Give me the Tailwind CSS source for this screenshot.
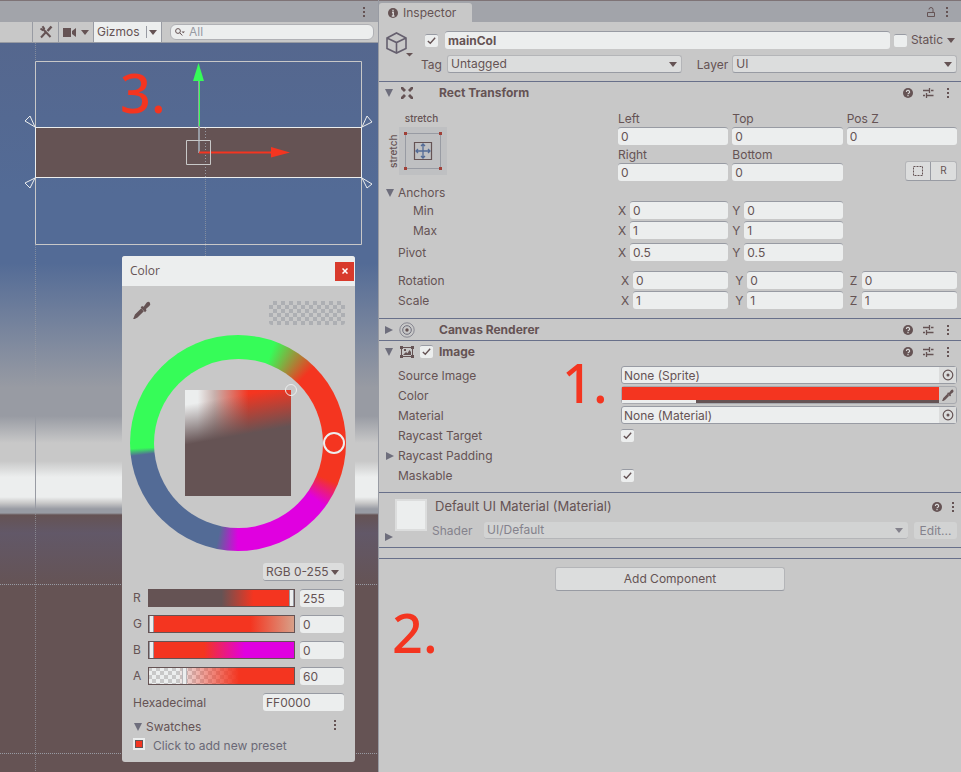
<!DOCTYPE html>
<html lang="en">
<head>
<meta charset="utf-8">
<meta name="viewport" content="width=device-width, initial-scale=1">
<title>Scene and Inspector</title>
<script src="https://cdn.jsdelivr.net/npm/@tailwindcss/browser@4"></script>
</head>
<body class="min-h-screen bg-[#c8c8c8] font-['Inter','Liberation_Sans',sans-serif] text-xs text-[#655354]">
<svg class="hidden" aria-hidden="true">
  <symbol id="dots" viewBox="0 0 4 12"><path d="M1 1h2v2H1zM1 5h2v2H1zM1 9h2v2H1z" fill="currentColor"/></symbol>
  <symbol id="down" viewBox="0 0 8 5"><path d="M0 0h8L4 5z" fill="currentColor"/></symbol>
  <symbol id="fold-open" viewBox="0 0 8 8"><path d="M0 0h8L4 8z" fill="#6e6e7c"/></symbol>
  <symbol id="fold-shut" viewBox="0 0 8 8"><path d="M0 0v8l8-4z" fill="#6e6e7c"/></symbol>
  <symbol id="check" viewBox="0 0 12 12"><path d="M2 6.5 4.7 9 10 3" fill="none" stroke="currentColor" stroke-width="1.5"/></symbol>
  <symbol id="help" viewBox="0 0 10 10"><circle cx="5" cy="5" r="5" fill="currentColor"/><path d="M3.4 4a1.6 1.5 0 1 1 2.4 1.2Q5 5.6 5 6.3M5 7.1v1.2" fill="none" stroke="#d8d8d8" stroke-width="1.2"/></symbol>
  <symbol id="preset" viewBox="0 0 12 12"><path d="M1 3.5h6.500M9 3.500h2.500M1 8.500h2M4.500 8.500h7M7.500 1v5M4.500 6v5" fill="none" stroke="currentColor" stroke-width="1.300"/></symbol>
  <symbol id="target" viewBox="0 0 12 12"><circle cx="6" cy="6" r="4.800" fill="none" stroke="currentColor" stroke-width="1.200"/><circle cx="6" cy="6" r="1.500" fill="currentColor"/></symbol>
  <symbol id="dropper" viewBox="0 0 16 16"><path d="M8 4.500 9.500 5 12 1.500q2-1.500 3 0t-.5 3L11.500 7l.5 1.500-1.300 1.500L6.800 5.800z" fill="currentColor"/><path d="M8 7 2.500 12.500 1.500 15l2-1L9 8.500" fill="none" stroke="currentColor" stroke-width="1.800"/></symbol>
</svg>

<div class="grid min-h-screen grid-cols-[minmax(0,378fr)_minmax(0,583fr)]">

<!-- Scene view -->
<section class="flex min-w-0 flex-col" aria-label="Scene">
  <header class="flex h-[22px] items-center justify-end border-t border-[#655354]/60 bg-[#a2a4aa] px-3">
    <button aria-label="Scene menu"><svg class="h-3 w-1"><use href="#dots"/></svg></button>
  </header>
  <div class="flex h-[21px] border-b border-[#989ba3] bg-[#c8c8c8]">
    <div class="w-8"></div>
    <button class="grid w-[26px] place-items-center border-l border-[#989ba3]" aria-label="Tools">
      <svg class="size-[14px]" viewBox="0 0 14 14" fill="none" stroke="currentColor"><path d="M4 4l7.500 8" stroke-width="2"/><path d="M1.500 3.500 3.500 5 5 3.500 3.500 1.300" stroke-width="2"/><path d="M2 12.500 7 7" stroke-width="2"/><path d="M8.500 6 12.500 1.500" stroke-width="2.500"/></svg>
    </button>
    <button class="flex w-[35px] items-center justify-between border-l border-[#989ba3] px-1" aria-label="Scene camera">
      <svg class="h-[9px] w-[13px]" viewBox="0 0 13 9" fill="currentColor"><path d="M0 0h8v9H0zM9 3l4-3v9L9 6z"/></svg>
      <svg class="h-[5px] w-2"><use href="#down"/></svg>
    </button>
    <button class="flex w-[69px] items-center justify-between border-x border-[#989ba3] bg-[#eceeee] pr-1 pl-[3px]">
      <span>Gizmos</span><span class="ml-1 h-3 w-px bg-[#989ba3]"></span><svg class="h-[5px] w-2"><use href="#down"/></svg>
    </button>
    <div class="flex min-w-0 flex-1 items-center pr-1 pl-2">
      <label class="flex h-4 w-full items-center gap-1 rounded-md border border-[#b0b1b5] bg-[#eceeee] pl-1">
        <svg class="h-2 w-[10px] shrink-0" viewBox="0 0 10 8" fill="none" stroke="currentColor"><circle cx="3" cy="3" r="2.400"/><path d="m4.800 4.800 2.500 2.700"/><path d="M6.500 3.500h3.500L8.200 5.300z" fill="currentColor" stroke="none"/></svg>
        <input class="min-w-0 flex-1 bg-transparent outline-none placeholder:text-[#989ba3]" type="search" placeholder="All" aria-label="Search scene">
      </label>
    </div>
  </div>

  <div class="relative flex-1 overflow-hidden bg-[linear-gradient(#55678e_0px,#536b96_150px,#536b96_220px,#989ba3_345px,#989ba3_373px,#c8c8c8_400px,#c8c8c8_418px,#eceeee_434px,#eceeee_454px,#c8c8c8_460px,#989ba3_466px,#989ba3_470px,#655354_472px,#625868_490px,#655354_545px)]">
    <svg class="absolute top-0 left-0 h-[729px] w-[378px]" viewBox="0 43 378 729" fill="none">
      <path d="M35.500 43v18M35.500 245v150M35.500 510v262M205.500 179v77" stroke="#989ba3" stroke-opacity=".7" stroke-dasharray="1 1"/>
      <path d="M35.500 410v100" stroke="#989ba3"/>
      <path d="M0 584.500h378M0 753.500h378" stroke="#989ba3" stroke-dasharray="1 1"/>
      <path d="M36 127h326v51H36z" fill="#655354"/>
      <path d="M205.500 128v50" stroke="#989ba3" stroke-dasharray="1 2"/>
      <path d="M35.500 61.500h326v183h-326z" stroke="#c8c8c8"/>
      <path d="M35 127.500h327M35 177.500h327M35.500 127v51M361.500 127v51" stroke="#eceeee"/>
      <g stroke="#eceeee"><path d="m35 127-10-6 5-5zM362 127l10-5-5-6zM35 178l-10 5 5 5zM362 178l10 6-5 4z"/></g>
      <path d="M199 80v73" stroke="#989ba3" stroke-width="2"/><path d="M199.500 80v46" stroke="#36fc58"/>
      <path d="m198.500 63 5.500 18h-11z" fill="#36fc58"/>
      <path d="M199 152.500h72" stroke="#f43520" stroke-width="2"/><path d="m271 147 19 5.500-19 5z" fill="#f43520"/>
      <path d="M186.500 140.500h24v24h-24z" stroke="#c8c8c8"/>
    </svg>
    <p class="absolute top-[11px] left-[120px] font-['Noto_Sans',sans-serif] text-[54px] leading-[76px] font-medium text-[#f43520]">3.</p>

    <!-- Colour picker window -->
    <div class="absolute top-[213px] left-[122px] w-[233px] rounded-[3px] bg-[#c8c8c8] text-[#655354]" role="dialog" aria-label="Color">
      <div class="flex h-[30px] items-center justify-between rounded-t-[3px] bg-[#eceeee] pr-px pl-2">
        <h2 class="font-['Open_Sans',sans-serif]">Color</h2>
        <button class="grid size-[19px] place-items-center bg-[#d83a2c] text-white" aria-label="Close"><svg class="size-[6px]" viewBox="0 0 6 6"><path d="m.5.5 5 5m0-5-5 5" stroke="currentColor" stroke-width="1.500"/></svg></button>
      </div>
      <div class="flex flex-col px-2 pt-[15px] pb-[7px]">
        <div class="flex items-start justify-between pr-[2px] pl-[3px]">
          <button aria-label="Pick a colour from the screen"><svg class="size-[18px]"><use href="#dropper"/></svg></button>
          <div class="h-6 w-[76px] rounded-[3px] bg-[repeating-conic-gradient(#adafb3_0_25%,#c8c8c8_0_50%)] bg-[length:8px_8px]"></div>
        </div>
        <div class="relative mt-[10px] grid size-[216px] place-items-center rounded-full bg-[conic-gradient(#36fc58_20deg,#f43520_45deg,#f43520_112deg,#e000e0_126deg,#e000e0_180deg,#536b96_192deg,#536b96_263deg,#36fc58_267deg)]">
          <div class="grid size-[169px] place-items-center rounded-full bg-[#c8c8c8]">
            <div class="size-[106px] bg-[linear-gradient(170deg,#65535400_12%,#655354_44%),linear-gradient(to_right,#eceeee_12%,#c8b0ac_28%,#f43520_60%)]"></div>
          </div>
          <span class="absolute top-[97px] left-[193px] size-[22px] rounded-full border-2 border-[#eceeee]"></span>
          <span class="absolute top-[49px] left-[155px] size-3 rounded-full border border-[#eceeee]"></span>
        </div>
        <div class="mt-3 flex flex-col gap-2 px-[3px]">
          <div class="relative flex items-center self-end">
            <select class="h-[18px] w-[81px] appearance-none rounded-[3px] border-b border-[#989ba3] bg-[#dcdddd] pl-[3px]" aria-label="Colour mode"><option>RGB 0-255</option></select>
            <svg class="pointer-events-none absolute right-[5px] h-[5px] w-2"><use href="#down"/></svg>
          </div>
          <div class="flex h-[18px] items-center">
            <label class="w-[15px]" for="r">R</label>
            <input class="h-[18px] w-[147px] appearance-none border border-[#655354] bg-[linear-gradient(to_right,#655354_50%,#f43520_72%)] [&::-webkit-slider-thumb]:h-4 [&::-webkit-slider-thumb]:w-[5px] [&::-webkit-slider-thumb]:appearance-none [&::-webkit-slider-thumb]:border-x [&::-webkit-slider-thumb]:border-[#989ba3] [&::-webkit-slider-thumb]:bg-[#eceeee]" id="r" type="range" min="0" max="255" value="255">
            <input class="ml-[5px] h-[18px] w-11 rounded-[3px] border-t border-[#989ba3] bg-[#eceeee] px-[3px]" value="255" aria-label="Red value">
          </div>
          <div class="flex h-[18px] items-center">
            <label class="w-[15px]" for="g">G</label>
            <input class="h-[18px] w-[147px] appearance-none border border-[#655354] bg-[linear-gradient(to_right,#f43520_70%,#d8a088)] [&::-webkit-slider-thumb]:h-4 [&::-webkit-slider-thumb]:w-[5px] [&::-webkit-slider-thumb]:appearance-none [&::-webkit-slider-thumb]:border-x [&::-webkit-slider-thumb]:border-[#989ba3] [&::-webkit-slider-thumb]:bg-[#eceeee]" id="g" type="range" min="0" max="255" value="0">
            <input class="ml-[5px] h-[18px] w-11 rounded-[3px] border-t border-[#989ba3] bg-[#eceeee] px-[3px]" value="0" aria-label="Green value">
          </div>
          <div class="flex h-[18px] items-center">
            <label class="w-[15px]" for="b">B</label>
            <input class="h-[18px] w-[147px] appearance-none border border-[#655354] bg-[linear-gradient(to_right,#f43520_38%,#e000e0_66%)] [&::-webkit-slider-thumb]:h-4 [&::-webkit-slider-thumb]:w-[5px] [&::-webkit-slider-thumb]:appearance-none [&::-webkit-slider-thumb]:border-x [&::-webkit-slider-thumb]:border-[#989ba3] [&::-webkit-slider-thumb]:bg-[#eceeee]" id="b" type="range" min="0" max="255" value="0">
            <input class="ml-[5px] h-[18px] w-11 rounded-[3px] border-t border-[#989ba3] bg-[#eceeee] px-[3px]" value="0" aria-label="Blue value">
          </div>
          <div class="flex h-[18px] items-center">
            <label class="w-[15px]" for="a">A</label>
            <div class="h-[18px] w-[147px] bg-[repeating-conic-gradient(#eceeee_0_25%,#c8c8c8_0_50%)] bg-[length:8px_8px]">
            <input class="block h-[18px] w-full appearance-none border border-[#655354] bg-[linear-gradient(to_right,#f4352000_20%,#f43520_62%)] [&::-webkit-slider-thumb]:h-4 [&::-webkit-slider-thumb]:w-[5px] [&::-webkit-slider-thumb]:appearance-none [&::-webkit-slider-thumb]:border-x [&::-webkit-slider-thumb]:border-[#b8b8bb] [&::-webkit-slider-thumb]:bg-[#eceeee]" id="a" type="range" min="0" max="255" value="60">
            </div>
            <input class="ml-[5px] h-[18px] w-11 rounded-[3px] border-t border-[#989ba3] bg-[#eceeee] px-[3px]" value="60" aria-label="Alpha value">
          </div>
          <div class="flex h-[18px] items-center justify-between">
            <label class="pt-[2px]" for="hex">Hexadecimal</label>
            <input class="h-[18px] w-[81px] rounded-[3px] border-t border-[#989ba3] bg-[#eceeee] px-[3px]" id="hex" value="FF0000">
          </div>
        </div>
        <div class="mt-[7px] flex h-[18px] items-center justify-between pr-[10px] pl-1">
          <button class="flex items-center gap-1"><svg class="size-2"><use href="#fold-open"/></svg>Swatches</button>
          <button aria-label="Swatch menu"><svg class="mb-[5px] h-3 w-1"><use href="#dots"/></svg></button>
        </div>
        <button class="mt-px flex h-[18px] items-center gap-2 pl-[3px] text-[#6a6876]">
          <span class="mb-1 size-3 border-2 border-[#eceeee] bg-[#655354] p-px"><span class="block size-full bg-[#f43520]"></span></span>Click to add new preset
        </button>
      </div>
    </div>
  </div>
</section>

<!-- Inspector -->
<section class="relative flex min-w-0 flex-col border-l border-[#989ba3]" aria-label="Inspector">
  <header class="flex h-[22px] items-end justify-between border-t border-[#655354]/60 bg-[#a2a4aa] pr-3">
    <h1 class="flex h-[19px] w-[93px] items-center gap-[5px] rounded-t-[3px] bg-[#c8c8c8] pt-px pl-[9px]">
      <svg class="size-[10px]" viewBox="0 0 10 10"><circle cx="5" cy="5" r="5" fill="currentColor"/><path d="M5 1.800v1.500M4 4.500h1.300V8M3.800 8h2.700" fill="none" stroke="#d8d8d8" stroke-width="1.300"/></svg>Inspector
    </h1>
    <div class="flex h-5 items-center gap-[10px]">
      <button aria-label="Lock"><svg class="h-[10px] w-2" viewBox="0 0 8 10" fill="none" stroke="currentColor"><path d="M.5 5.500h7v4h-7zM6 5V2.500q0-2-2-2t-2 2"/></svg></button>
      <button aria-label="Inspector menu"><svg class="h-3 w-1"><use href="#dots"/></svg></button>
    </div>
  </header>

  <div class="flex gap-[9px] pt-[9px] pr-1 pb-2 pl-[7px]">
    <button class="relative h-[26px] w-[30px] shrink-0" aria-label="Object icon">
      <svg class="h-[26px] w-[28px]" viewBox="0 0 28 26" fill="none"><path d="M1 7 10.500 2 20 7v10.500L10.500 22 1 17.500zM1 7l9.500 4.500L20 7M10.500 11.500V22" stroke="#655f6e" stroke-width="1.600"/><path d="M20 22h7l-3.500 3.500z" fill="#655354"/></svg>
    </button>
    <div class="flex min-w-0 flex-1 flex-col gap-[6px]">
      <div class="flex h-[18px] items-center">
        <label class="grid size-[13px] shrink-0 place-items-center"><input class="size-[13px] appearance-none rounded-[2px] border-t border-[#989ba3] bg-[#eceeee] [grid-area:1/1]" type="checkbox" checked aria-label="Active"><svg class="size-[11px] [grid-area:1/1]"><use href="#check"/></svg></label>
        <input class="ml-[7px] h-[18px] min-w-0 flex-1 rounded-[3px] border-t border-[#989ba3] bg-[#eceeee] px-[3px] font-bold" value="mainCol" aria-label="Object name">
        <label class="ml-1 flex items-center gap-1"><input class="size-[13px] appearance-none rounded-[2px] border-t border-[#989ba3] bg-[#eceeee]" type="checkbox">Static</label>
        <svg class="mr-[2px] ml-1 h-[5px] w-2"><use href="#down"/></svg>
      </div>
      <div class="-ml-1 flex h-[18px] items-center">
        <label class="w-[26px] shrink-0 pt-[2px]" for="tag">Tag</label>
        <div class="relative flex flex-[234] items-center">
          <select class="h-[18px] w-full appearance-none rounded-[3px] border border-b-[#989ba3] border-[#b4b5b8] bg-[#dcdddd] pl-[3px]" id="tag"><option>Untagged</option></select>
          <svg class="pointer-events-none absolute right-[5px] h-[5px] w-2"><use href="#down"/></svg>
        </div>
        <label class="mr-1 ml-[15px] pt-[2px]" for="layer">Layer</label>
        <div class="relative flex flex-[224] items-center">
          <select class="h-[18px] w-full appearance-none rounded-[3px] border border-b-[#989ba3] border-[#b4b5b8] bg-[#dcdddd] pl-[3px]" id="layer"><option>UI</option></select>
          <svg class="pointer-events-none absolute right-[5px] h-[5px] w-2"><use href="#down"/></svg>
        </div>
      </div>
    </div>
  </div>

  <!-- Rect Transform -->
  <section class="border-t border-[#68708a] pb-[9px]">
    <div class="flex h-[21px] items-center pr-[11px] pl-[6px]">
      <button aria-label="Collapse"><svg class="size-2"><use href="#fold-open"/></svg></button>
      <svg class="ml-2 size-3" viewBox="0 0 12 12" fill="currentColor"><path d="M0 0h2l3 3-2 2-3-3zM12 0h-2L7 3l2 2 3-3zM0 12h2l3-3-2-2-3 3zM12 12h-2L7 9l2-2 3 3z"/><path d="M5 0h2v12H5zM0 5h12v2H0z" fill="#c8c8c8"/></svg>
      <h2 class="ml-[26px] flex-1 font-bold">Rect Transform</h2>
      <div class="flex items-center gap-3"><button aria-label="Help"><svg class="size-[10px]"><use href="#help"/></svg></button><button class="-ml-[3px]" aria-label="Presets"><svg class="size-3"><use href="#preset"/></svg></button><button aria-label="Menu"><svg class="h-3 w-1"><use href="#dots"/></svg></button></div>
    </div>
    <div class="flex items-start pt-[6px] pr-1 pl-2">
      <button class="grid w-[231px] shrink-0 grid-cols-[12px_48px] items-center text-[10px] leading-none font-medium" aria-label="Anchor presets">
        <span></span><span class="py-1 pr-[3px] text-center">stretch</span>
        <span class="grid h-12 w-3 rotate-180 place-items-center text-center [writing-mode:vertical-rl]">stretch</span>
        <svg class="size-12" viewBox="0 0 48 48" fill="none"><path d="M0 0h48v48H0z" fill="#bfc0c2"/><path d="M6.500 6.500h35v35h-35z" stroke="#989ba3"/><path d="M5 5h3v3H5zM40 5h3v3h-3zM5 40h3v3H5zM40 40h3v3h-3z" fill="#a04038"/><path d="M15.500 15.500h17v17h-17z" stroke="#655354" stroke-width="1.200"/><path d="M24 17v14M17 24h14M22 19l2-2 2 2M22 29l2 2 2-2M19 22l-2 2 2 2M29 22l2 2-2 2" stroke="#536b96" stroke-width="1.300"/></svg>
      </button>
      <div class="grid min-w-0 flex-1 grid-cols-3 gap-x-1">
        <label class="flex h-[18px] items-center pt-[2px]" for="left">Left</label><label class="flex h-[18px] items-center pt-[2px]" for="top">Top</label><label class="flex h-[18px] items-center pt-[2px]" for="posz">Pos Z</label>
        <input class="h-[18px] min-w-0 rounded-[3px] border-t border-[#989ba3] bg-[#eceeee] px-[3px]" id="left" value="0"><input class="h-[18px] min-w-0 rounded-[3px] border-t border-[#989ba3] bg-[#eceeee] px-[3px]" id="top" value="0"><input class="h-[18px] min-w-0 rounded-[3px] border-t border-[#989ba3] bg-[#eceeee] px-[3px]" id="posz" value="0">
        <label class="flex h-[18px] items-center pt-[2px]" for="right">Right</label><label class="flex h-[18px] items-center pt-[2px]" for="bottom">Bottom</label><span></span>
        <input class="h-[18px] min-w-0 rounded-[3px] border-t border-[#989ba3] bg-[#eceeee] px-[3px]" id="right" value="0"><input class="h-[18px] min-w-0 rounded-[3px] border-t border-[#989ba3] bg-[#eceeee] px-[3px]" id="bottom" value="0">
        <div class="-mt-[2px] flex h-5 justify-self-end rounded-[3px] border border-b-[#989ba3] border-[#b4b5b8] bg-[#dcdddd] text-[10px]">
          <button class="grid w-6 place-items-center" aria-label="Blueprint mode"><svg class="size-[10px]" viewBox="0 0 10 10"><path d="M.5.5h9v9h-9z" fill="none" stroke="currentColor" stroke-dasharray="2 1"/></svg></button>
          <button class="w-[26px] border-l border-[#989ba3]" aria-label="Raw edit mode">R</button>
        </div>
      </div>
    </div>
    <div class="flex flex-col pt-[2px] pr-1 pl-[7px]">
      <button class="flex h-[18px] items-center gap-1 self-start pt-[2px]"><svg class="size-2"><use href="#fold-open"/></svg>Anchors</button>
      <div class="flex h-[18px] items-center pl-[27px]">
        <span class="w-[205px] shrink-0 pt-[2px]">Min</span>
        <div class="grid min-w-0 flex-1 grid-cols-3 gap-x-1">
          <label class="flex items-center"><span class="w-3 pt-px">X</span><input class="h-[18px] min-w-0 flex-1 rounded-[3px] border-t border-[#989ba3] bg-[#eceeee] px-[3px]" value="0"></label>
          <label class="flex items-center"><span class="w-3 pt-px">Y</span><input class="h-[18px] min-w-0 flex-1 rounded-[3px] border-t border-[#989ba3] bg-[#eceeee] px-[3px]" value="0"></label>
        </div>
      </div>
      <div class="mt-[2px] flex h-[18px] items-center pl-[27px]">
        <span class="w-[205px] shrink-0 pt-[2px]">Max</span>
        <div class="grid min-w-0 flex-1 grid-cols-3 gap-x-1">
          <label class="flex items-center"><span class="w-3 pt-px">X</span><input class="h-[18px] min-w-0 flex-1 rounded-[3px] border-t border-[#989ba3] bg-[#eceeee] px-[3px]" value="1"></label>
          <label class="flex items-center"><span class="w-3 pt-px">Y</span><input class="h-[18px] min-w-0 flex-1 rounded-[3px] border-t border-[#989ba3] bg-[#eceeee] px-[3px]" value="1"></label>
        </div>
      </div>
      <div class="mt-1 flex h-[18px] items-center pl-3">
        <span class="w-[220px] shrink-0 pt-[2px]">Pivot</span>
        <div class="grid min-w-0 flex-1 grid-cols-3 gap-x-1">
          <label class="flex items-center"><span class="w-3 pt-px">X</span><input class="h-[18px] min-w-0 flex-1 rounded-[3px] border-t border-[#989ba3] bg-[#eceeee] px-[3px]" value="0.5"></label>
          <label class="flex items-center"><span class="w-3 pt-px">Y</span><input class="h-[18px] min-w-0 flex-1 rounded-[3px] border-t border-[#989ba3] bg-[#eceeee] px-[3px]" value="0.5"></label>
        </div>
      </div>
      <div class="mt-[10px] flex h-[18px] items-center pl-3">
        <span class="w-[220px] shrink-0 pt-[2px]">Rotation</span>
        <div class="grid min-w-0 flex-1 grid-cols-3 gap-x-1">
          <label class="flex items-center pl-[3px]"><span class="w-3 pt-px">X</span><input class="h-[18px] min-w-0 flex-1 rounded-[3px] border-t border-[#989ba3] bg-[#eceeee] px-[3px]" value="0"></label>
          <label class="flex items-center pl-[3px]"><span class="w-3 pt-px">Y</span><input class="h-[18px] min-w-0 flex-1 rounded-[3px] border-t border-[#989ba3] bg-[#eceeee] px-[3px]" value="0"></label>
          <label class="flex items-center pl-[3px]"><span class="w-3 pt-px">Z</span><input class="h-[18px] min-w-0 flex-1 rounded-[3px] border-t border-[#989ba3] bg-[#eceeee] px-[3px]" value="0"></label>
        </div>
      </div>
      <div class="mt-[2px] flex h-[18px] items-center pl-3">
        <span class="w-[220px] shrink-0 pt-[2px]">Scale</span>
        <div class="grid min-w-0 flex-1 grid-cols-3 gap-x-1">
          <label class="flex items-center pl-[3px]"><span class="w-3 pt-px">X</span><input class="h-[18px] min-w-0 flex-1 rounded-[3px] border-t border-[#989ba3] bg-[#eceeee] px-[3px]" value="1"></label>
          <label class="flex items-center pl-[3px]"><span class="w-3 pt-px">Y</span><input class="h-[18px] min-w-0 flex-1 rounded-[3px] border-t border-[#989ba3] bg-[#eceeee] px-[3px]" value="1"></label>
          <label class="flex items-center pl-[3px]"><span class="w-3 pt-px">Z</span><input class="h-[18px] min-w-0 flex-1 rounded-[3px] border-t border-[#989ba3] bg-[#eceeee] px-[3px]" value="1"></label>
        </div>
      </div>
    </div>
  </section>

  <!-- Canvas Renderer -->
  <section class="border-t border-[#68708a]">
    <div class="flex h-[21px] items-center pr-[11px] pl-[6px]">
      <button aria-label="Expand"><svg class="size-2"><use href="#fold-shut"/></svg></button>
      <svg class="ml-[6px] size-4" viewBox="0 0 16 16" fill="none" stroke="#6e6e7c"><circle cx="8" cy="8" r="7.200" stroke-opacity=".7"/><circle cx="8" cy="8" r="4.300"/><circle cx="8" cy="8" r="1.700" fill="#655354" stroke="none"/></svg>
      <h2 class="ml-6 flex-1 font-bold">Canvas Renderer</h2>
      <div class="flex items-center gap-3"><button aria-label="Help"><svg class="size-[10px]"><use href="#help"/></svg></button><button class="-ml-[3px]" aria-label="Presets"><svg class="size-3"><use href="#preset"/></svg></button><button aria-label="Menu"><svg class="h-3 w-1"><use href="#dots"/></svg></button></div>
    </div>
  </section>

  <!-- Image -->
  <section class="relative border-t border-[#68708a] pb-2">
    <div class="flex h-[21px] items-center pr-[11px] pl-[6px]">
      <button aria-label="Collapse"><svg class="size-2"><use href="#fold-open"/></svg></button>
      <svg class="ml-[7px] h-3 w-[14px]" viewBox="0 0 14 12" fill="none"><path d="M2 1.500h10M2 10.500h10M1.500 2v8M12.500 2v8" stroke="currentColor"/><path d="M0 0h3v3H0zM11 0h3v3h-3zM0 9h3v3H0zM11 9h3v3h-3zM3 9l3-3 1.500 1.200L9.500 4 11 6v3zM4 3h2v2H4z" fill="currentColor"/></svg>
      <label class="ml-[6px] grid size-[13px] place-items-center"><input class="size-[13px] appearance-none rounded-[2px] border-t border-[#989ba3] bg-[#eceeee] [grid-area:1/1]" type="checkbox" checked aria-label="Image enabled"><svg class="size-[11px] [grid-area:1/1]"><use href="#check"/></svg></label>
      <h2 class="ml-[6px] flex-1 font-bold">Image</h2>
      <div class="flex items-center gap-3"><button aria-label="Help"><svg class="size-[10px]"><use href="#help"/></svg></button><button class="-ml-[3px]" aria-label="Presets"><svg class="size-3"><use href="#preset"/></svg></button><button aria-label="Menu"><svg class="h-3 w-1"><use href="#dots"/></svg></button></div>
    </div>
    <div class="grid auto-rows-[18px] grid-cols-[223px_minmax(0,1fr)] items-center gap-y-[2px] pt-1 pr-1 pl-[19px]">
      <label class="pt-[2px]" for="src">Source Image</label>
      <div class="flex h-[18px] rounded-[3px] border border-[#989ba3] bg-[#eceeee]"><input class="min-w-0 flex-1 px-[2px] pt-[2px]" id="src" value="None (Sprite)" readonly><button class="grid w-[17px] place-items-center bg-[#dcdddd]" aria-label="Select sprite"><svg class="size-3"><use href="#target"/></svg></button></div>
      <span class="pt-[2px]">Color</span>
      <div class="flex h-[18px] rounded-[3px] border border-[#a8aaaf]"><button class="flex min-w-0 flex-1 flex-col bg-[#f43520]" aria-label="Color"><span class="flex-1"></span><span class="h-[3px] w-full bg-[linear-gradient(to_right,#eceeee_23.500%,#655354_0)]"></span></button><button class="grid w-[17px] place-items-center" aria-label="Pick color"><svg class="size-3"><use href="#dropper"/></svg></button></div>
      <label class="pt-[2px]" for="mat">Material</label>
      <div class="flex h-[18px] rounded-[3px] border border-[#989ba3] bg-[#eceeee]"><input class="min-w-0 flex-1 px-[2px] pt-[2px]" id="mat" value="None (Material)" readonly><button class="grid w-[17px] place-items-center bg-[#dcdddd]" aria-label="Select material"><svg class="size-3"><use href="#target"/></svg></button></div>
      <label class="pt-[2px]" for="ray">Raycast Target</label>
      <span class="grid size-[13px] place-items-center"><input class="size-[13px] appearance-none rounded-[2px] border-t border-[#989ba3] bg-[#eceeee] [grid-area:1/1]" id="ray" type="checkbox" checked><svg class="pointer-events-none size-[11px] [grid-area:1/1]"><use href="#check"/></svg></span>
      <button class="col-span-2 -ml-3 flex items-center gap-1 justify-self-start pt-[2px]"><svg class="size-2"><use href="#fold-shut"/></svg>Raycast Padding</button>
      <label class="pt-[2px]" for="mask">Maskable</label>
      <span class="grid size-[13px] place-items-center"><input class="size-[13px] appearance-none rounded-[2px] border-t border-[#989ba3] bg-[#eceeee] [grid-area:1/1]" id="mask" type="checkbox" checked><svg class="pointer-events-none size-[11px] [grid-area:1/1]"><use href="#check"/></svg></span>
    </div>
    <p class="absolute top-[3px] left-[183px] font-['Noto_Sans',sans-serif] text-[54px] leading-[76px] font-medium text-[#f43520]">1.</p>
  </section>

  <!-- Material -->
  <section class="flex h-[55px] border-t border-[#68708a] pt-[5px] pr-1 pl-[6px]">
    <button class="self-end pb-[6px]" aria-label="Expand"><svg class="size-2"><use href="#fold-shut"/></svg></button>
    <div class="mt-px ml-[2px] size-8 shrink-0 border-2 border-[#dcdddd] bg-[#eceeee]"></div>
    <div class="ml-[5px] flex min-w-0 flex-1 flex-col">
      <div class="flex h-[18px] items-center pr-[2px]">
        <h2 class="flex-1 pl-[3px] text-[13px]">Default UI Material (Material)</h2>
        <button aria-label="Help"><svg class="size-[10px]"><use href="#help"/></svg></button>
        <button class="ml-[9px]" aria-label="Menu"><svg class="h-3 w-1"><use href="#dots"/></svg></button>
      </div>
      <div class="mt-[6px] flex h-[17px] items-center text-[#84828c]">
        <label class="w-[52px] pt-px" for="shader">Shader</label>
        <div class="relative flex flex-1 items-center">
          <select class="h-[17px] w-full appearance-none rounded-[3px] border-b border-[#b4b5b8] bg-[#d2d3d3] pl-[3px]" id="shader"><option>UI/Default</option></select>
          <svg class="pointer-events-none absolute right-[5px] h-[5px] w-2"><use href="#down"/></svg>
        </div>
        <button class="ml-[6px] h-[17px] w-[43px] rounded-[3px] bg-[#d2d3d3]">Edit...</button>
      </div>
    </div>
  </section>
  <div class="h-3 border-y border-[#68708a]"></div>

  <button class="mt-2 h-6 w-[230px] self-center rounded-[3px] border border-b-[#989ba3] border-[#b4b5b8] bg-[#dcdddd]">Add Component</button>
  <p class="absolute top-[594px] left-[13px] font-['Noto_Sans',sans-serif] text-[54px] leading-[76px] font-medium text-[#f43520]">2.</p>
</section>
</div>
</body>
</html>
